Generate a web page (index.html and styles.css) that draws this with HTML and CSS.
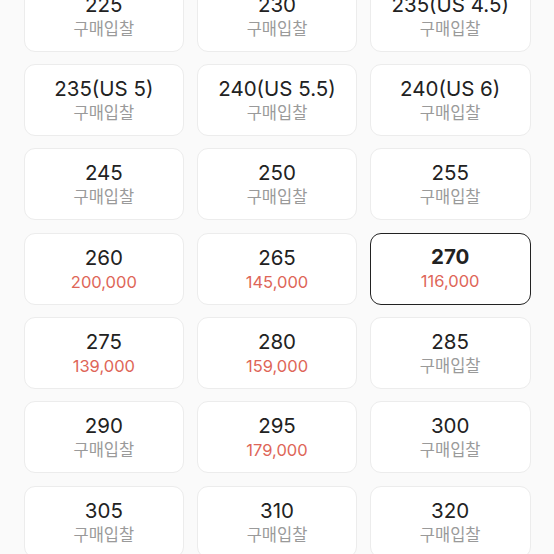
FILE: index.html
```html
<!DOCTYPE html>
<html>
<head>
    <title>사이즈 선택</title>
    <link rel="stylesheet" href="styles.css">
</head>
<body>
    <div class="sizes">
        <div class="size"><div class="num">225</div><div class="bid">구매입찰</div></div>
        <div class="size"><div class="num">230</div><div class="bid">구매입찰</div></div>
        <div class="size"><div class="num">235(US 4.5)</div><div class="bid">구매입찰</div></div>

        <div class="size"><div class="num">235(US 5)</div><div class="bid">구매입찰</div></div>
        <div class="size"><div class="num">240(US 5.5)</div><div class="bid">구매입찰</div></div>
        <div class="size"><div class="num">240(US 6)</div><div class="bid">구매입찰</div></div>

        <div class="size"><div class="num">245</div><div class="bid">구매입찰</div></div>
        <div class="size"><div class="num">250</div><div class="bid">구매입찰</div></div>
        <div class="size"><div class="num">255</div><div class="bid">구매입찰</div></div>

        <div class="size"><div class="num">260</div><div class="price">200,000</div></div>
        <div class="size"><div class="num">265</div><div class="price">145,000</div></div>
        <div class="size selected"><div class="num">270</div><div class="price">116,000</div></div>

        <div class="size"><div class="num">275</div><div class="price">139,000</div></div>
        <div class="size"><div class="num">280</div><div class="price">159,000</div></div>
        <div class="size"><div class="num">285</div><div class="bid">구매입찰</div></div>

        <div class="size"><div class="num">290</div><div class="bid">구매입찰</div></div>
        <div class="size"><div class="num">295</div><div class="price">179,000</div></div>
        <div class="size"><div class="num">300</div><div class="bid">구매입찰</div></div>

        <div class="size"><div class="num">305</div><div class="bid">구매입찰</div></div>
        <div class="size"><div class="num">310</div><div class="bid">구매입찰</div></div>
        <div class="size"><div class="num">320</div><div class="bid">구매입찰</div></div>
    </div>
</body>
</html>
```
FILE: styles.css
```css
html, body {
    margin: 0;
    background-color: #fafafa;
    overflow: hidden;
}
body {
    height: 554px;
    font-family: "Inter", "Noto Sans CJK KR", sans-serif;
}
.sizes {
    display: grid;
    grid-template-columns: 1fr 1fr 1fr;
    grid-auto-rows: 72px;
    column-gap: 12.5px;
    row-gap: 12.4px;
    padding: 0 23.5px;
    margin-top: -20.5px;
}
.size {
    box-sizing: border-box;
    background-color: #fff;
    border: 1px solid #ececec;
    border-radius: 11px;
    display: flex;
    flex-direction: column;
    align-items: center;
    padding-top: 11px;
}
.size.selected {
    border: 1.5px solid #222;
    padding-top: 10.5px;
}
.num {
    font-size: 20.5px;
    line-height: 25px;
    color: #222;
}
.selected .num {
    font-weight: 700;
}
.bid, .price {
    font-size: 16.5px;
    line-height: 24px;
    margin-top: 0;
}
.bid {
    color: #9a9a9a;
}
.price {
    color: #de6658;
}
```
